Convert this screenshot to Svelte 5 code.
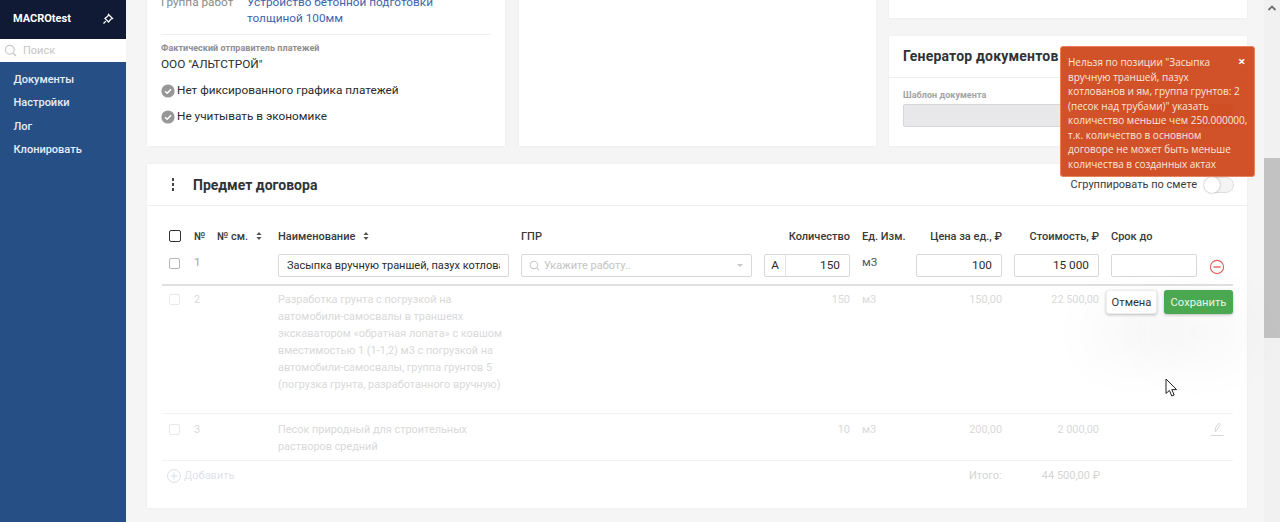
<script>
	const menu = ['Документы', 'Настройки', 'Лог', 'Клонировать'];
	const checks = ['Нет фиксированного графика платежей', 'Не учитывать в экономике'];
	const toastLines = [
		'Нельзя по позиции "Засыпка',
		'вручную траншей, пазух',
		'котлованов и ям, группа грунтов: 2',
		'(песок над трубами)" указать',
		'количество меньше чем 250.000000,',
		'т.к. количество в основном',
		'договоре не может быть меньше',
		'количества в созданных актах'
	];
	const heads = [
		{ label: '№' },
		{ label: '№ см.', sort: true },
		{ label: 'Наименование', sort: true },
		{ label: 'ГПР' },
		{ label: 'Количество', right: true },
		{ label: 'Ед. Изм.' },
		{ label: 'Цена за ед., ₽', right: true },
		{ label: 'Стоимость, ₽', right: true },
		{ label: 'Срок до' }
	];
	const rows = [
		{
			num: 2,
			name: 'Разработка грунта с погрузкой на автомобили-самосвалы в траншеях экскаватором «обратная лопата» с ковшом вместимостью 1 (1-1,2) м3 с погрузкой на автомобили-самосвалы, группа грунтов 5 (погрузка грунта, разработанного вручную)',
			qty: '150',
			price: '150,00',
			cost: '22 500,00',
			tall: true
		},
		{
			num: 3,
			name: 'Песок природный для строительных растворов средний',
			qty: '10',
			price: '200,00',
			cost: '2 000,00',
			edit: true
		}
	];
</script>

<div class="page">
	<nav class="sidebar">
		<div class="brand">
			<span>MACROtest</span>
			<svg width="12" height="12" viewBox="0 0 12 12" fill="none" stroke="#fff" stroke-width="1.3">
				<path d="M6.5 1.5 10.5 5.5 8.8 6.2 6.6 9 3 5.4 5.8 3.2Z" />
				<path d="M3.9 8.1 1.5 10.5" />
			</svg>
		</div>
		<div class="search">
			<svg width="13" height="13" viewBox="0 0 13 13" fill="none" stroke="#c4c4c4" stroke-width="1.1">
				<circle cx="5.8" cy="5.8" r="4.4" />
				<path d="M9 9l3 3" />
			</svg>
			<span>Поиск</span>
		</div>
		<ul>
			{#each menu as item}
				<li>{item}</li>
			{/each}
		</ul>
	</nav>

	<main class="content">
		<div class="top-row">
			<section class="card info">
				<div class="field">
					<span class="field-label">Группа работ</span>
					<span class="field-value">Устройство бетонной подготовки толщиной 100мм</span>
				</div>
				<hr />
				<div class="small-label">Фактический отправитель платежей</div>
				<div class="sender">ООО "АЛЬТСТРОЙ"</div>
				<div class="checks">
					{#each checks as check}
						<div class="check">
							<svg width="14" height="14" viewBox="0 0 14 14">
								<circle cx="7" cy="7" r="6.6" fill="#979797" />
								<path d="M4 7.2 6.2 9.3 10 5.2" fill="none" stroke="#fff" stroke-width="1.5" />
							</svg>
							<span>{check}</span>
						</div>
					{/each}
				</div>
			</section>
			<section class="card"></section>
			<div class="right-col">
				<section class="card stub"></section>
				<section class="card generator">
					<h2>Генератор документов</h2>
					<div class="generator-body">
						<div class="small-label grey">Шаблон документа</div>
						<div class="generator-controls">
							<div class="template"></div>
							<div class="generate"></div>
						</div>
					</div>
				</section>
			</div>
		</div>

		<section class="card contract">
			<header class="contract-head">
				<span class="dots"><i></i><i></i><i></i></span>
				<h2>Предмет договора</h2>
				<label class="group">
					<span>Сгруппировать по смете</span>
					<span class="toggle"><i></i></span>
				</label>
			</header>

			<div class="table">
				<div class="row heading">
					<span class="box dark"></span>
					{#each heads as head}
						<span class:right={head.right}>
							{head.label}
							{#if head.sort}
								<svg class="sort" width="6" height="8" viewBox="0 0 6 8" fill="#555">
									<path d="M3 0 5.6 3H.4ZM3 8 .4 5H5.6Z" />
								</svg>
							{/if}
						</span>
					{/each}
					<span></span>
				</div>

				<div class="row editing">
					<span class="box"></span>
					<span class="faint-num">1</span>
					<span></span>
					<span><input class="input name-input" readonly value="Засыпка вручную траншей, пазух котлованов и ям, группа грунтов: 2 (песок над трубами)" /></span>
					<span>
						<span class="input gpr">
							<svg width="11" height="11" viewBox="0 0 13 13" fill="none" stroke="#c8c8c8" stroke-width="1.2">
								<circle cx="5.8" cy="5.8" r="4.4" />
								<path d="M9 9l3 3" />
							</svg>
							<span>Укажите работу..</span>
							<i class="caret"></i>
						</span>
					</span>
					<span>
						<span class="input qty">
							<b>А</b>
							<span>150</span>
						</span>
					</span>
					<span class="unit">м3</span>
					<span><span class="input num">100</span></span>
					<span><span class="input num">15 000</span></span>
					<span><span class="input"></span></span>
					<span class="remove">
						<svg width="16" height="16" viewBox="0 0 16 16" fill="none" stroke="#e2605a" stroke-width="1.1">
							<circle cx="8" cy="8" r="6.6" />
							<path d="M4.4 8h7.2" stroke-width="1.4" />
						</svg>
					</span>
				</div>

				{#each rows as row}
					<div class="row muted" class:tall={row.tall}>
						<span class="box pale"></span>
						<span>{row.num}</span>
						<span></span>
						<span class="name">{row.name}</span>
						<span></span>
						<span class="right">{row.qty}</span>
						<span>м3</span>
						<span class="right">{row.price}</span>
						<span class="right">{row.cost}</span>
						<span></span>
						<span class="edit">
							{#if row.edit}
								<svg width="16" height="16" viewBox="0 0 16 16" fill="none" stroke="#d8d8d8" stroke-width="1">
									<path d="M6.2 11 6.6 7 9.4 2.6C10 1.9 11.6 2.9 11.1 3.8L8.4 8.2Z" />
									<path d="M1.5 14.5h13" />
								</svg>
							{/if}
						</span>
					</div>
				{/each}

				<div class="row total">
					<span class="add">
						<svg width="14" height="14" viewBox="0 0 14 14" fill="none" stroke="#d9dee8" stroke-width="1">
							<circle cx="7" cy="7" r="6.4" />
							<path d="M7 3.5v7M3.5 7h7" />
						</svg>
						Добавить
					</span>
					<span class="total-label">Итого:</span>
					<span class="total-sum">44 500,00 ₽</span>
				</div>

				<div class="row-actions">
					<button class="cancel">Отмена</button>
					<button class="save">Сохранить</button>
				</div>
			</div>
		</section>
	</main>

	<aside class="scrollbar">
		<svg width="10" height="6" viewBox="0 0 10 6" fill="none" stroke="#6f6f6f" stroke-width="1.8">
			<path d="M1.5 5 5 1.6 8.5 5" />
		</svg>
		<div class="thumb"></div>
	</aside>

	<div class="toast">
		{#each toastLines as line}
			<div class="toast-line">{line}</div>
		{/each}
		<span class="close">×</span>
	</div>

	<svg class="cursor" width="13" height="20" viewBox="0 0 13 20">
		<path d="M1 1V15.5L4.4 12.4 6.8 18 9.2 17 6.8 11.6H11.6Z" fill="#fff" stroke="#222" stroke-width="1" />
	</svg>
</div>

<style>
	:global(body) {
		margin: 0;
		overflow: hidden;
	}

	.page {
		display: flex;
		height: 522px;
		overflow: hidden;
		background: #f6f5f6;
		font-family: Roboto, 'Liberation Sans', sans-serif;
		font-size: 11.8px;
		color: #2b2b2b;
		position: relative;
	}

	.sidebar {
		width: 126px;
		flex: none;
		background: #265085;
		color: #e6edf5;
	}

	.brand {
		height: 39px;
		box-sizing: border-box;
		padding: 0 12px 2px 13px;
		display: flex;
		align-items: center;
		justify-content: space-between;
		background: #101a34;
		color: #fff;
		font-weight: 700;
		font-size: 11px;
	}

	.search {
		height: 23px;
		display: flex;
		align-items: center;
		gap: 6px;
		padding-left: 4px;
		background: #fff;
		color: #c6c6c6;
		font-size: 11px;
	}

	.sidebar ul {
		list-style: none;
		margin: 0;
		padding: 6px 0 0 13.5px;
	}

	.sidebar li {
		height: 23.3px;
		line-height: 23.3px;
		font-size: 11px;
		font-weight: 500;
	}

	.content {
		flex: 1;
		min-width: 0;
		padding: 0 17px 0 21px;
	}

	.top-row {
		display: grid;
		grid-template-columns: 358px 357px 358px;
		justify-content: space-between;
		height: 166px;
		margin-top: -20px;
	}

	.card {
		background: #fff;
		box-shadow: 0 0 2px rgba(0, 0, 0, 0.06);
	}

	.info {
		padding: 14px 14px 0;
	}

	.field {
		display: flex;
		line-height: 16px;
	}

	.field-label {
		width: 86px;
		flex: none;
		color: #8a8a8a;
	}

	.field-value {
		width: 200px;
		color: #3f64ac;
	}

	hr {
		border: 0;
		border-top: 1px solid #eee;
		margin: 8px 0 7px;
	}

	.small-label {
		font-size: 9px;
		font-weight: 700;
		line-height: 12px;
		letter-spacing: 0.05px;
		color: #8f8f8f;
	}

	.small-label.grey {
		color: #a3a3a3;
	}

	.sender {
		margin-top: 2px;
		line-height: 16px;
		color: #2b2b2b;
	}

	.checks {
		margin-top: 7px;
		display: grid;
		gap: 4px;
	}

	.check {
		height: 22px;
		display: flex;
		align-items: center;
		gap: 2px;
	}

	.check svg {
		margin-top: 1px;
	}

	.right-col {
		display: flex;
		flex-direction: column;
		gap: 18px;
	}

	.stub {
		flex: 1;
	}

	.generator {
		height: 110px;
	}

	.generator h2,
	.contract-head h2 {
		margin: 0;
		font-size: 14px;
		font-weight: 700;
		color: #2f3336;
	}

	.generator h2 {
		height: 41px;
		line-height: 40px;
		padding-left: 14px;
		border-bottom: 1px solid #eee;
		letter-spacing: 0.2px;
	}

	.generator-body {
		padding: 11px 14px 0;
	}

	.generator-controls {
		display: flex;
		gap: 8px;
		margin-top: 3px;
	}

	.template {
		flex: 1;
		height: 23px;
		background: #e8e8ea;
		border: 1px solid #d6d6d8;
		box-sizing: border-box;
		border-radius: 2px;
	}

	.generate {
		width: 100px;
		height: 23px;
		background: #b85a33;
		border-radius: 2px;
	}

	.contract {
		margin-top: 18px;
		height: 344px;
	}

	.contract-head {
		height: 41px;
		display: flex;
		align-items: center;
		padding: 0 13px 0 25px;
		border-bottom: 1px solid #eee;
	}

	.dots {
		display: grid;
		gap: 2px;
		margin-right: 19px;
	}

	.dots i {
		width: 2px;
		height: 3px;
		background: #444;
	}

	.group {
		margin-left: auto;
		display: flex;
		align-items: center;
		gap: 7px;
		font-size: 11px;
		color: #3a3a3a;
	}

	.toggle {
		width: 30px;
		height: 16px;
		box-sizing: border-box;
		border: 1px solid #ddd;
		border-radius: 8px;
		position: relative;
		background: #f4f4f4;
	}

	.toggle i {
		position: absolute;
		left: -1px;
		top: -1px;
		width: 16px;
		height: 16px;
		border-radius: 50%;
		background: #fff;
		box-shadow: 0 0 2px rgba(0, 0, 0, 0.4);
	}

	.table {
		position: relative;
		margin: 0 14px 0 15px;
		padding-top: 18px;
	}

	.row {
		display: grid;
		grid-template-columns: 32px 23px 61px 243px 243px 98px 54px 98px 97px 98px 24px;
		box-sizing: border-box;
		padding-left: 0;
	}

	.row > span {
		padding-right: 12px;
		min-width: 0;
	}

	.box {
		box-sizing: border-box;
		display: block;
		width: 11px;
		height: 11px;
		margin-left: 7px;
		border: 1px solid #b4b4b4;
		border-radius: 2px;
		padding: 0 !important;
	}

	.box.dark {
		width: 12px;
		height: 12px;
		border-color: #333;
		margin-top: 6px;
	}

	.box.pale {
		border-color: #e8e8e8;
		margin-top: 3px;
	}

	.heading {
		height: 24px;
		line-height: 26px;
		font-size: 11px;
		font-weight: 500;
		color: #3a3a3a;
		white-space: nowrap;
	}

	.sort {
		margin-left: 5px;
	}

	.right {
		text-align: right;
	}

	.editing {
		height: 38px;
		padding-top: 6px;
		border-bottom: 2px solid #e0e0e0;
	}

	.editing > .box {
		margin-top: 4px;
	}

	.faint-num {
		line-height: 16px;
		color: #a5a5a5;
	}

	.unit {
		line-height: 16px;
		color: #555;
	}

	.input {
		display: block;
		width: 100%;
		font: inherit;
		height: 23px;
		line-height: 21px;
		box-sizing: border-box;
		border: 1px solid #d8d8d8;
		border-radius: 2px;
		background: #fff;
		padding: 0 9px;
		white-space: nowrap;
		overflow: hidden;
		color: #2b2b2b;
	}

	.name-input {
		font-size: 11px;
		padding: 0 8px;
		outline: none;
	}

	.num {
		text-align: right;
	}

	.gpr {
		display: flex;
		align-items: center;
		gap: 4px;
		padding: 0 7px;
		font-size: 11px;
		color: #c4c4c4;
	}

	.caret {
		margin-left: auto;
		width: 0;
		height: 0;
		border: 3px solid transparent;
		border-top-color: #c8c8c8;
		border-bottom: 0;
		margin-right: 1px;
	}

	.qty {
		display: flex;
		padding: 0;
	}

	.qty b {
		width: 20px;
		flex: none;
		font-weight: 400;
		text-align: center;
		border-right: 1px solid #e2e2e2;
	}

	.qty span {
		flex: 1;
		text-align: right;
		padding-right: 9px;
	}

	.remove {
		padding: 5px 0 0 0 !important;
	}

	.muted {
		color: #d9d9d9;
		font-size: 10.9px;
		line-height: 17px;
		padding-top: 7px;
		padding-bottom: 5px;
		border-bottom: 1px solid #f3f3f3;
	}

	.muted.tall {
		height: 128px;
		padding-top: 5px;
	}

	.edit {
		padding: 0 !important;
	}

	.total {
		padding-top: 8px;
		line-height: 14px;
		font-size: 11px;
		color: #d4d4d4;
		display: flex;
	}

	.add {
		display: flex;
		align-items: center;
		gap: 3px;
		width: 807px;
		padding: 0 0 0 5px !important;
		color: #dfe3ea;
		box-sizing: border-box;
	}

	.total-label {
		width: 32px;
		padding: 0 !important;
	}

	.total-sum {
		width: 99px;
		padding: 0 !important;
		text-align: right;
	}

	.row-actions {
		position: absolute;
		right: 0;
		top: 84px;
		display: flex;
		gap: 7px;
	}

	.row-actions button {
		height: 24px;
		box-sizing: border-box;
		font: inherit;
		font-size: 11.2px;
		border-radius: 3px;
		padding: 0;
		cursor: pointer;
		box-shadow: 0 1px 3px rgba(0, 0, 0, 0.25), 0 30px 60px 10px rgba(0, 0, 0, 0.05);
	}

	.cancel {
		width: 51px;
		background: #fff;
		border: 1px solid #eee;
		color: #333;
	}

	.save {
		width: 69px;
		background: #4aa851;
		border: 0;
		color: #eaf6ea;
	}

	.scrollbar {
		width: 16px;
		flex: none;
		background: #f1f1f1;
		display: flex;
		flex-direction: column;
		align-items: center;
		padding-top: 5px;
		box-sizing: border-box;
	}

	.thumb {
		width: 100%;
		height: 180px;
		margin-top: 147px;
		background: #c2c2c2;
	}

	.toast {
		position: absolute;
		left: 1060px;
		top: 46px;
		width: 195px;
		height: 131px;
		box-sizing: border-box;
		padding: 8px 0 0 7px;
		background: rgba(208, 78, 36, 0.98);
		border: 1px solid #e8825a;
		border-radius: 3px;
		color: #fbe6dc;
		font-family: 'Open Sans', sans-serif;
		font-size: 10px;
		line-height: 14.5px;
	}

	.toast-line {
		white-space: nowrap;
	}

	.close {
		position: absolute;
		left: 177px;
		top: 7px;
		font-weight: 700;
		font-size: 13px;
		color: #fff;
	}

	.cursor {
		position: absolute;
		left: 1165px;
		top: 378px;
	}
</style>
